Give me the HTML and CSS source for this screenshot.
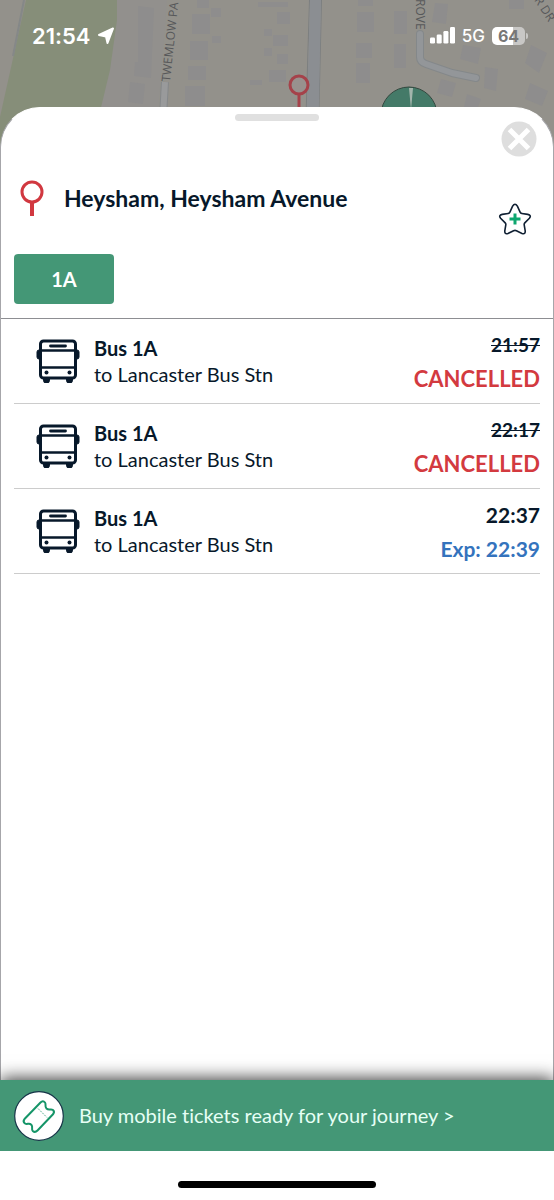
FILE: index.html
```
<!DOCTYPE html>
<html lang="en">
<head>
  <meta charset="utf-8">
  <meta name="viewport" content="width=device-width, initial-scale=1">
  <title>Heysham, Heysham Avenue</title>
  <link rel="stylesheet" href="styles.css">
</head>
<body>

  <!-- shared icons -->
  <svg class="icon-defs" aria-hidden="true">
    <symbol id="bus" viewBox="0 0 44 44">
      <rect x="4.500" y="2" width="35" height="37" rx="3" fill="none" stroke="currentColor" stroke-width="3"/>
      <path d="M4 11.500h36M4 28.500h36" stroke="currentColor" stroke-width="2.600"/>
      <path d="M14.500 7h15" stroke="currentColor" stroke-width="2.800" stroke-linecap="round"/>
      <path d="M4 11H3a2 2 0 0 0-2 2v5a2 2 0 0 0 2 2h1zM40 11h1a2 2 0 0 1 2 2v5a2 2 0 0 1-2 2h-1z" fill="currentColor" stroke="currentColor"/>
      <circle cx="10.500" cy="33.500" r="2" fill="currentColor"/>
      <circle cx="33.500" cy="33.500" r="2" fill="currentColor"/>
      <path d="M7 39h7v2a3.300 3.300 0 0 1-7 0zM30 39h7v2a3.300 3.300 0 0 1-7 0z" fill="currentColor"/>
    </symbol>
  </svg>

  <div class="map">
    <svg class="map-tiles" viewBox="0 0 554 150" preserveAspectRatio="xMidYMin slice" aria-hidden="true">
      <rect width="554" height="150" fill="#93918b"/>
      <path d="M117 0h50l-12 150H92z" fill="#92908d"/>
      <path d="M26 0h91v20l-7 50-12 50v30H0v-33z" fill="#868e79"/>
      <path d="M24 0L13 56" stroke="#858888" stroke-width="2"/>
      <g fill="#8e8d8d">
        <path d="M138 6l16 2-3 70-17-2 1-14h3zM130 82l15 2-2 20-15-2z"/>
        <path d="M197 0h12v8h-12zM192 14h18v20h-18zM190 41h18v19h-18zM188 66h18v14h-18zM185 86h20v20h-20z"/>
        <path d="M211 8h10v9h-10zM212 36h9v7h-9zM258 2h30v5h-30zM264 29h8v7h-8zM264 48h8v8h-8zM250 80h12v5h-12z"/>
        <path d="M277 12h13v12h-13zM273 35h15v11h-15zM277 54h11v10h-11zM269 70h17v12h-17z"/>
        <path d="M358 0h15v6h-15zM357 12h17v20h-17zM356 43h16v15h-16zM356 63h14v20h-14zM394 11h13v23h-13zM394 44h12v24h-12z"/>
        <path d="M435 3l13 1-2 20-14-2zM509 0h15v9h-15zM463 45l18 3-3 16-18-5zM485 67l13 2-2 22-12-3zM531 45l16 8-8 20-14-10zM530 83l18 8-6 15-17-7z"/>
        <path d="M441 79l15 4-4 14-15-4zM467 94l14 5-3 8h-14z"/>
      </g>
      <path d="M309.500 0L305 150M321.500 0L318 150" stroke="#7c7f80"/>
      <path d="M310 0h11l-3 150h-12z" fill="#8b8e92"/>
      <path d="M165 82l-4 68" stroke="#85888a" stroke-width="8"/>
      <path d="M165 82l-4 68" stroke="#999a9b" stroke-width="6"/>
      <path d="M420 34v23q0 5 6 7l26 9 24 5" fill="none" stroke="#84888a" stroke-width="8" stroke-linecap="round" stroke-linejoin="round"/>
      <path d="M420 34v23q0 5 6 7l26 9 24 5" fill="none" stroke="#939699" stroke-width="6" stroke-linecap="round" stroke-linejoin="round"/>
      <g class="street">
        <text transform="translate(170 82) rotate(-84)">TWEMLOW PA</text>
        <text transform="translate(416 -1) rotate(90)">ROVE</text>
        <text transform="translate(534 0) rotate(57)">R DR</text>
      </g>
      <circle cx="299" cy="85" r="9" fill="#98918e" stroke="#a5424a" stroke-width="3"/>
      <path d="M299 95v20" stroke="#a5424a" stroke-width="3"/>
      <circle cx="409" cy="115" r="28" fill="#447a68" stroke="#33483f"/>
      <path d="M409 88h4l-2 22z" fill="#a3b5ac"/>
    </svg>

    <div class="status">
      <div class="status-left">
        <span class="clock">21:54</span>
        <svg width="18" height="18" viewBox="0 0 18 18" aria-hidden="true"><path d="M16 1.500L10.500 16 9 9.500 2 8z" fill="#fff" stroke="#fff" stroke-width="2" stroke-linejoin="round"/></svg>
      </div>
      <div class="status-right">
        <svg width="25" height="17" viewBox="0 0 25 17" fill="#fff" aria-hidden="true">
          <rect x="0" y="10.500" width="5" height="6" rx="1.300"/><rect x="6.700" y="7.500" width="5" height="9" rx="1.300"/><rect x="13.400" y="4" width="5" height="12.500" rx="1.300"/><rect x="20" y="0" width="5" height="16.500" rx="1.300"/>
        </svg>
        <span class="network">5G</span>
        <span class="battery">64</span>
      </div>
    </div>
  </div>

  <main class="sheet">
    <div class="handle"></div>

    <div class="sheet-top">
      <button class="close" aria-label="Close">
        <svg width="36" height="36" viewBox="0 0 36 36"><circle cx="18" cy="18" r="17.500" fill="#dedede"/><path d="M8.500 8.500l19 19M27.500 8.500l-19 19" stroke="#fff" stroke-width="5"/></svg>
      </button>
    </div>

    <header class="stop">
      <svg class="pin" width="24" height="36" viewBox="0 0 24 36" aria-hidden="true"><circle cx="12" cy="12" r="10" fill="none" stroke="#d13840" stroke-width="3"/><path d="M12 22v14" stroke="#d13840" stroke-width="4"/></svg>
      <h1>Heysham, Heysham Avenue</h1>
      <button class="favourite" aria-label="Add to favourites">
        <svg width="34" height="32" viewBox="0 0 34 32"><path d="M14.600 3.200q2.400-4 4.800 0l2.700 6q.5 1.100 1.700 1.300l6 .9q4 .8 1.600 3.800l-4.600 4.700q-.8.900-.6 2l1 6q.3 3.900-3.200 2.500l-5.600-2.700q-1.400-.7-2.800 0L10 30.400q-3.500 1.400-3.200-2.500l1-6q.2-1.100-.6-2l-4.600-4.700q-2.400-3 1.600-3.800l6-.9q1.200-.2 1.700-1.300z" fill="#fff" stroke="#102033" stroke-width="1.600"/><path d="M17 10.500v11M11.500 16h11" stroke="#0da66f" stroke-width="3"/></svg>
      </button>
    </header>

    <div class="filters">
      <button class="route">1A</button>
    </div>

    <ul class="departures">
      <li>
        <svg class="bus"><use href="#bus"/></svg>
        <div class="service">
          <strong>Bus 1A</strong>
          <span>to Lancaster Bus Stn</span>
        </div>
        <div class="times">
          <s>21:57</s>
          <span class="cancelled">CANCELLED</span>
        </div>
      </li>
      <li>
        <svg class="bus"><use href="#bus"/></svg>
        <div class="service">
          <strong>Bus 1A</strong>
          <span>to Lancaster Bus Stn</span>
        </div>
        <div class="times">
          <s>22:17</s>
          <span class="cancelled">CANCELLED</span>
        </div>
      </li>
      <li>
        <svg class="bus"><use href="#bus"/></svg>
        <div class="service">
          <strong>Bus 1A</strong>
          <span>to Lancaster Bus Stn</span>
        </div>
        <div class="times">
          <span class="due">22:37</span>
          <span class="expected">Exp: 22:39</span>
        </div>
      </li>
    </ul>
  </main>

  <a class="tickets" href="#tickets">
    <svg width="50" height="50" viewBox="0 0 50 50" aria-hidden="true">
      <circle cx="25" cy="25" r="24.300" fill="#fff" stroke="#173448" stroke-width="1.200"/>
      <path d="M10.500 28L26.500 11.500Q29 9 31 11.500C32.500 13.500 30.300 15 32.500 17.500C35 20 36.500 17.300 39 19Q41 20.800 39 23.300L23.500 39.500Q21 42 18.800 40C16.800 38 19.500 36.300 17.300 33.700C14.800 31.300 13.500 34 11 32.500Q8.500 30.500 10.500 28z" fill="none" stroke="#159568" stroke-width="2" stroke-linejoin="round"/>
      <path d="M24 17.500l9 9" stroke="#5fb394" stroke-dasharray="2 1"/>
    </svg>
    <span>Buy mobile tickets ready for your journey &gt;</span>
  </a>

  <footer class="home">
    <div class="home-bar"></div>
  </footer>

</body>
</html>
```

FILE: styles.css
```
*{
  box-sizing: border-box;
}
body{
  margin: 0;
  min-height: 100vh;
  display: flex;
  flex-direction: column;
  background-color: #fff;
  color: #07182a;
  font-family: Lato, "Liberation Sans", sans-serif;
  font-variant-ligatures: none;
}
button{
  border: none;
  padding: 0;
  background: none;
  font-family: inherit;
  cursor: pointer;
}
svg{
  display: block;
  flex: none;
}
.icon-defs{
  position: absolute;
  width: 0;
  height: 0;
}

/* map and status bar */
.map{
  position: relative;
}
.map-tiles{
  width: 100%;
  height: 150px;
}
.street{
  font: 12px "Open Sans", sans-serif;
  fill: #57585a;
}
.status{
  position: absolute;
  top: 0;
  left: 0;
  right: 0;
  height: 71px;
  padding: 0 29px 0 32px;
  display: flex;
  align-items: center;
  justify-content: space-between;
  color: #fff;
  font-family: Inter, sans-serif;
}
.status-left, .status-right{
  display: flex;
  align-items: center;
  gap: 6px;
}
.status-right{
  gap: 7px;
}
.clock{
  font-size: 22px;
  font-weight: 600;
}
.network{
  font-size: 17px;
  font-weight: 500;
}
.battery{
  position: relative;
  width: 33px;
  height: 18px;
  border-radius: 5px;
  background: linear-gradient(90deg, #fff 65%, #c8c7c5 65%);
  color: #777;
  font-size: 16px;
  font-weight: 700;
  line-height: 18px;
  text-align: center;
}
.battery::after{
  content: "";
  position: absolute;
  left: 34px;
  top: 6px;
  width: 2px;
  height: 6px;
  border-radius: 0 2px 2px 0;
  background-color: #c8c7c5;
}

/* sheet */
.sheet{
  position: relative;
  flex: 1;
  margin-top: -43px;
  border: 1px solid #a6a6aa;
  border-top-color: #fff;
  border-bottom: none;
  border-radius: 40px 40px 0 0;
  background-color: #fff;
}
.handle{
  width: 84px;
  height: 7px;
  margin: 6px auto 0;
  border-radius: 4px;
  background-color: #e0e0e0;
}
.sheet-top{
  display: flex;
  justify-content: flex-end;
  padding-right: 16px;
}
.stop{
  display: flex;
  align-items: flex-start;
  padding: 23px 21px 0 19px;
}
.stop h1{
  flex: 1;
  margin: 4px 0 0 20px;
  font-size: 23px;
  font-weight: 700;
  line-height: 28px;
}
.favourite{
  margin-top: 23px;
}
.filters{
  padding: 19px 13px 14px;
  border-bottom: 1px solid #8d8e92;
}
.route{
  width: 100px;
  height: 50px;
  border-radius: 4px;
  background-color: #449776;
  color: #fff;
  font-size: 20px;
  font-weight: 700;
}
.departures{
  margin: 0 13px;
  padding: 0;
  list-style: none;
}
.departures li{
  display: flex;
  align-items: flex-start;
  padding: 12px 0 10px 22px;
  border-bottom: 1px solid #ccc;
}
.bus{
  width: 44px;
  height: 44px;
  margin: 8px 14px 0 0;
}
.service, .times{
  display: flex;
  flex-direction: column;
}
.service{
  flex: 1;
  padding-top: 4px;
  font-size: 20px;
  line-height: 26px;
}
.service strong{
  font-weight: 700;
}
.times{
  align-items: flex-end;
  gap: 6px;
  font-size: 21px;
  font-weight: 700;
  line-height: 28px;
}
.times s{
  font-size: 19px;
}
.cancelled{
  font-size: 22px;
  color: #d33a3f;
}
.expected{
  color: #3473bd;
}

/* tickets banner */
.tickets{
  position: relative;
  display: flex;
  align-items: center;
  gap: 15px;
  padding: 11px 14px 10px;
  background-color: #449776;
  box-shadow: 0 -2px 16px rgba(0, 0, 0, .75);
  color: #e6fff5;
  font-size: 20px;
  text-decoration: none;
}
.tickets span{
  padding-bottom: 2px;
}
.home{
  position: relative;
  display: flex;
  justify-content: center;
  height: 49px;
  padding-top: 30px;
  background-color: #fff;
}
.home-bar{
  width: 198px;
  height: 7px;
  border-radius: 4px;
  background-color: #000;
}
```
